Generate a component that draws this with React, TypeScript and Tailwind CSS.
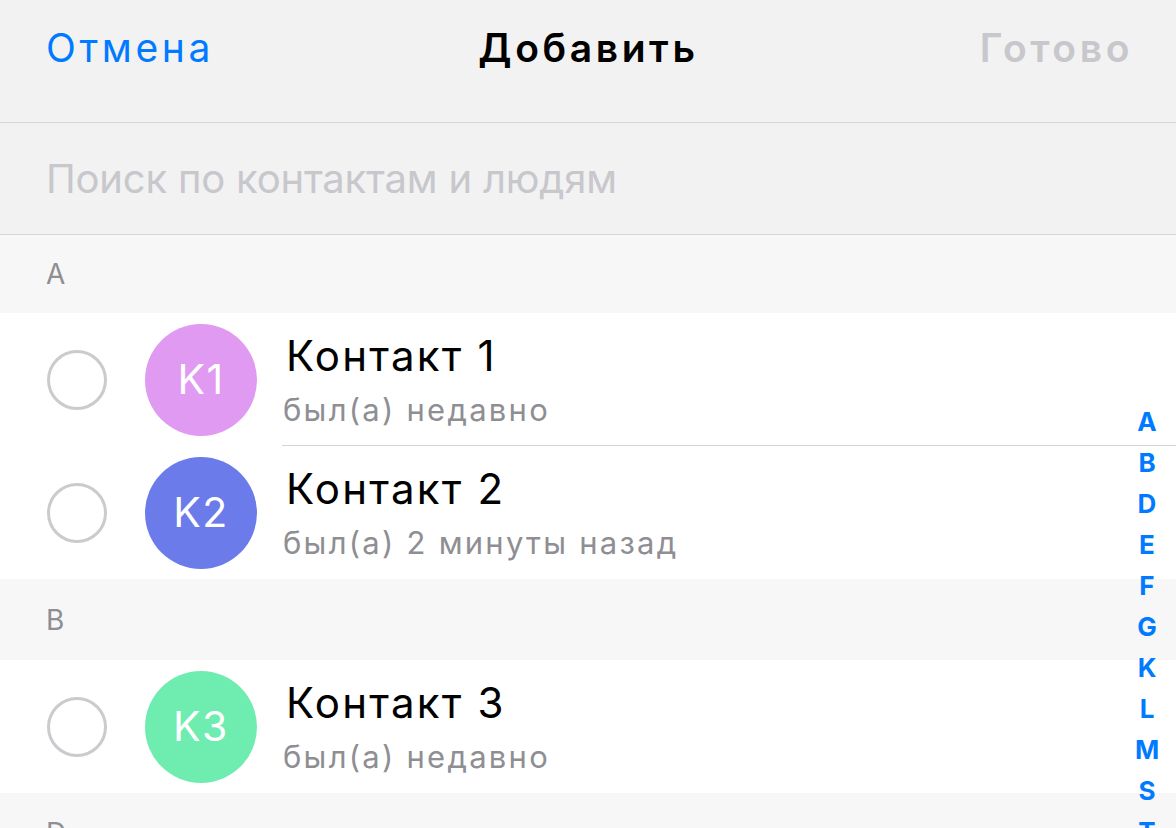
import React from "react";

const font = { fontFamily: "Inter, 'Noto Sans', sans-serif" };

type Contact = { initials: string; name: string; status: string; color: string };

function Row({ c, separator }: { c: Contact; separator?: boolean }) {
  return (
    <div className="flex h-[133px] bg-white items-stretch">
      <div className="w-[286px] shrink-0 flex items-center">
        <div className="ml-[47px] w-[60px] h-[60px] rounded-full border-[3px] border-[#cbcbcf]" />
        <div
          className="ml-[38px] w-[112px] h-[112px] rounded-full flex items-center justify-center text-white text-[41px] tracking-[1.5px] leading-none"
          style={{ backgroundColor: c.color }}
        >
          {c.initials}
        </div>
      </div>
      <div className={`flex-1 flex flex-col justify-center ${separator ? "border-b border-[#d4d4d6] -ml-[4px] pl-[4px]" : ""}`}>
        <div className="text-[42px] leading-none tracking-[2.2px] text-black mt-[1px]">{c.name}</div>
        <div className="text-[31px] leading-none tracking-[2.25px] text-[#8e8e93] mt-[17px] -ml-[3px]">{c.status}</div>
      </div>
    </div>
  );
}

function Section({ letter, h }: { letter: string; h: string }) {
  return (
    <div className={`${h} bg-[#f7f7f7] flex items-center pl-[46px] text-[28px] text-[#8e8e93] leading-none`}>
      {letter}
    </div>
  );
}

export default function App() {
  const index = ["A", "B", "D", "E", "F", "G", "K", "L", "M", "S", "T"];
  return (
    <div className="relative w-[1176px] h-[828px] overflow-hidden bg-[#f7f7f7]" style={font}>
      <div className="h-[123px] bg-[#f2f2f2] border-b border-[#d6d6d6] grid grid-cols-3 items-start pl-[46px] pr-[43px] pt-[28px]">
        <span className="justify-self-start text-[39px] leading-none tracking-[3.6px] text-[#007aff]">Отмена</span>
        <span className="justify-self-center -ml-[2px] text-[39px] leading-none tracking-[3.6px] font-semibold text-black">Добавить</span>
        <span className="justify-self-end text-[39px] leading-none tracking-[3.6px] font-semibold text-[#c7c7cc]">Готово</span>
      </div>
      <div className="h-[112px] bg-[#f2f2f2] border-b border-[#d6d6d6] flex items-center pl-[46px]">
        <span className="text-[40px] leading-none tracking-[-0.2px] text-[#c7c7cc]">Поиск по контактам и людям</span>
      </div>
      <Section letter="A" h="h-[78px]" />
      <Row c={{ initials: "K1", name: "Контакт 1", status: "был(а) недавно", color: "#e09af1" }} separator />
      <Row c={{ initials: "K2", name: "Контакт 2", status: "был(а) 2 минуты назад", color: "#6b7bea" }} />
      <Section letter="B" h="h-[81px]" />
      <Row c={{ initials: "K3", name: "Контакт 3", status: "был(а) недавно", color: "#6fecb0" }} />
      <Section letter="D" h="h-[80px]" />
      <div className="absolute right-[15px] top-[401px] flex flex-col items-center w-[28px]">
        {index.map((l) => (
          <div key={l} className="h-[41px] flex items-center justify-center text-[26px] font-bold text-[#007aff] leading-none">
            {l}
          </div>
        ))}
      </div>
    </div>
  );
}
